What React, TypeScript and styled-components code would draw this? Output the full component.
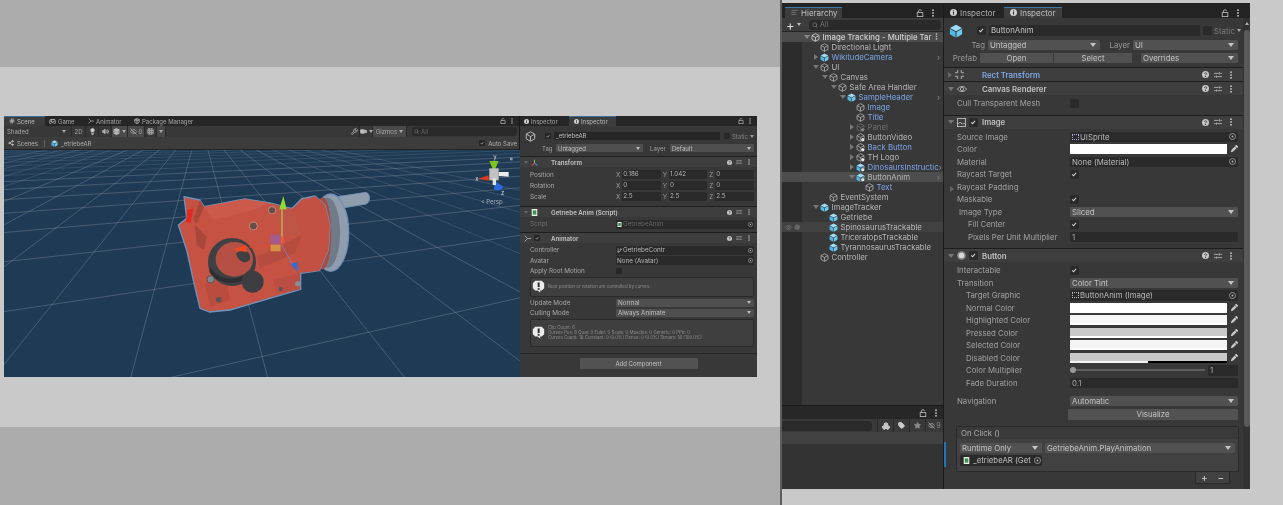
import React from 'react';
import styled, { createGlobalStyle } from 'styled-components';
import { Hash, Gamepad2, Package, Lightbulb, Volume2, Layers, EyeOff, Grid3x3, Wrench, Video, Tag, Star, Eye, Hand, AlignLeft, Search, Share2, Boxes, GitBranch } from 'lucide-react';

const Global = createGlobalStyle`
  html, body { margin: 0; padding: 0; background: #c9c9c9; overflow: hidden; }
  * { box-sizing: border-box; }
  body { font-family: Inter, "Liberation Sans", sans-serif; }
`;

const Page = styled.div`display:flex;width:1283px;height:505px;`;
const LeftArea = styled.div`width:780px;display:flex;flex-direction:column;`;
const GreyBand = styled.div<{ $h?: number }>`background:#acacac;height:${p => (p.$h ? `${p.$h}px` : 'auto')};flex:${p => (p.$h ? 'none' : '1')};`;
const LightBand = styled.div`background:#c9c9c9;height:360px;padding:49px 0 0 4px;`;
const Divider = styled.div`width:2px;background:#5e5e5e;`;
const RightArea = styled.div`flex:1;display:flex;flex-direction:column;padding-top:3px;background:#c9c9c9;`;

/* ---------- small drawings ---------- */
const Tri = styled.span<{ $open?: boolean; $c?: string; $s?: number }>`
  display:inline-block;width:0;height:0;flex:none;
  ${p => {
    const s = p.$s ?? 3;
    const c = p.$c ?? '#777';
    return p.$open
      ? `border-left:${s}px solid transparent;border-right:${s}px solid transparent;border-top:${s + 1}px solid ${c};`
      : `border-top:${s}px solid transparent;border-bottom:${s}px solid transparent;border-left:${s + 1}px solid ${c};`;
  }}
`;
const Cube = ({ s = 9, c = '#b4b4b4' }: { s?: number; c?: string }) => (
  <svg width={s} height={s} viewBox="0 0 16 16" fill="none" stroke={c} strokeWidth="1.4" style={{ flex: 'none' }}>
    <path d="M8 1.2 14.2 4.6V11.4L8 14.8 1.8 11.4V4.6Z" />
    <path d="M1.8 4.6 8 8 14.2 4.6M8 8V14.8" />
  </svg>
);
const Prefab = ({ s = 9, badge = false }: { s?: number; badge?: boolean }) => (
  <svg width={s} height={s} viewBox="0 0 16 16" style={{ flex: 'none' }}>
    <path d="M8 .8 14.8 4.5 8 8.2 1.2 4.5Z" fill="#9fdcf5" />
    <path d="M1 5.4 7.4 9V15.4L1 11.8Z" fill="#4fb8e6" />
    <path d="M15 5.4 8.6 9V15.4L15 11.8Z" fill="#6ec9ee" />
    {badge && <circle cx="12" cy="12" r="3.6" fill="#e8e8e8" stroke="#222" strokeWidth="1" />}
  </svg>
);
const BadgeCube = ({ s = 9, dim }: { s?: number; dim?: boolean }) => (
  <svg width={s} height={s} viewBox="0 0 16 16" fill="none" style={{ flex: 'none', opacity: dim ? 0.45 : 1 }}>
    <path d="M8 1.2 14.2 4.6V11.4L8 14.8 1.8 11.4V4.6Z M1.8 4.6 8 8 14.2 4.6M8 8V14.8" stroke="#b4b4b4" strokeWidth="1.4" />
    <circle cx="12" cy="12" r="3.6" fill="#e8e8e8" stroke="#222" strokeWidth="1" />
  </svg>
);
const Lock = ({ s = 8, c = '#c4c4c4' }: { s?: number; c?: string }) => (
  <svg width={s} height={s} viewBox="0 0 10 10" fill="none" stroke={c} strokeWidth="1" style={{ flex: 'none' }}>
    <rect x="1.5" y="4.5" width="7" height="5" />
    <path d="M3 4.5V2.2C3 .6 7 .6 7 2.2" />
  </svg>
);
const Kebab = ({ s = 8, c = '#c4c4c4' }: { s?: number; c?: string }) => (
  <svg width={s} height={s} viewBox="0 0 10 10" fill={c} style={{ flex: 'none' }}>
    <rect x="4" y=".5" width="2" height="2" /><rect x="4" y="4" width="2" height="2" /><rect x="4" y="7.5" width="2" height="2" />
  </svg>
);
const Info = ({ s = 7 }: { s?: number }) => (
  <svg width={s} height={s} viewBox="0 0 10 10" style={{ flex: 'none' }}>
    <circle cx="5" cy="5" r="5" fill="#cfcfcf" /><rect x="4.2" y="2" width="1.6" height="1.6" fill="#333" /><rect x="4.2" y="4.4" width="1.6" height="3.6" fill="#333" />
  </svg>
);
const Help = ({ s = 7 }: { s?: number }) => (
  <svg width={s} height={s} viewBox="0 0 10 10" style={{ flex: 'none' }}>
    <circle cx="5" cy="5" r="5" fill="#c8c8c8" /><path d="M3.4 4C3.4 2.2 6.8 2.2 6.8 4 6.8 5.2 5 5 5 6.4" stroke="#333" strokeWidth="1.2" fill="none" /><rect x="4.3" y="7.2" width="1.4" height="1.4" fill="#333" />
  </svg>
);
const Sliders = ({ s = 8 }: { s?: number }) => (
  <svg width={s} height={s} viewBox="0 0 10 10" stroke="#c0c0c0" strokeWidth="1" fill="none" style={{ flex: 'none' }}>
    <path d="M0 3H6M8 3H10M7 1.5V4.5M0 7H2M4 7H10M3 5.5V8.5" />
  </svg>
);
const Check = ({ c = '#d8d8d8' }: { c?: string }) => (
  <svg width="70%" height="70%" viewBox="0 0 10 10" fill="none" stroke={c} strokeWidth="1.6"><path d="M2 5.5 4 7.5 8 3" /></svg>
);
const Picker = () => (
  <svg width="8" height="8" viewBox="0 0 10 10" style={{ flex: 'none' }}>
    <path d="M1 9 2 6 6 2 8 4 4 8Z" fill="#ccc" /><path d="M6 1 9 4 10 2 8 0Z" fill="#ddd" />
  </svg>
);
const Target = ({ s = 7 }: { s?: number }) => (
  <svg width={s} height={s} viewBox="0 0 10 10" fill="none" stroke="#b8b8b8" style={{ flex: 'none' }}>
    <circle cx="5" cy="5" r="4.3" /><circle cx="5" cy="5" r="1.3" fill="#b8b8b8" stroke="none" />
  </svg>
);
const Warn = ({ s = 14 }: { s?: number }) => (
  <svg width={s} height={s} viewBox="0 0 16 16" style={{ flex: 'none' }}>
    <path d="M4 1H12L15 4V10L12 13H10V15.5L7 13H4L1 10V4Z" fill="#ececec" /><rect x="7" y="3" width="2.4" height="5.8" fill="#2e2e2e" /><rect x="7" y="10" width="2.4" height="2" fill="#2e2e2e" />
  </svg>
);
const ScriptIcon = ({ s = 8 }: { s?: number }) => (
  <svg width={s} height={s} viewBox="0 0 10 10" style={{ flex: 'none' }}>
    <rect x="1" y="0" width="8" height="10" fill="#e6efe6" /><rect x="2.5" y="2" width="5" height="6" fill="#3f8f5a" />
  </svg>
);
const Axes = ({ s = 8 }: { s?: number }) => (
  <svg width={s} height={s} viewBox="0 0 10 10" fill="none" strokeWidth="1.5" style={{ flex: 'none' }}>
    <path d="M5 6V1" stroke="#7fc43a" /><path d="M5 6 1 9" stroke="#e0503c" /><path d="M5 6 9 9" stroke="#4f8fe0" />
  </svg>
);
const RectIcon = ({ s = 9 }: { s?: number }) => (
  <svg width={s} height={s} viewBox="0 0 10 10" fill="none" stroke="#b0b0b0" strokeWidth="1.1" style={{ flex: 'none' }}>
    <path d="M0 3H3V0M7 0V3H10M10 7H7V10M3 10V7H0" />
  </svg>
);
const EyeRing = ({ s = 10 }: { s?: number }) => (
  <svg width={s} height={s} viewBox="0 0 12 12" fill="none" stroke="#c0c0c0" strokeWidth="1" style={{ flex: 'none' }}>
    <path d="M.5 6C3 2 9 2 11.5 6 9 10 3 10 .5 6Z" /><circle cx="6" cy="6" r="2" />
  </svg>
);
const FrameIcon = ({ s = 9 }: { s?: number }) => (
  <svg width={s} height={s} viewBox="0 0 10 10" fill="none" stroke="#c0c0c0" style={{ flex: 'none' }}>
    <rect x=".5" y=".5" width="9" height="9" /><path d="M.5 7.5 3.5 4.5 6 7 7.5 5.5 9.5 7.5" />
  </svg>
);
const ButtonIcon = ({ s = 9 }: { s?: number }) => (
  <svg width={s} height={s} viewBox="0 0 10 10" style={{ flex: 'none' }}>
    <circle cx="5" cy="5" r="4.8" fill="#8c8c8c" /><circle cx="5" cy="5" r="3" fill="#d8d8d8" />
  </svg>
);
const AnimatorIcon = ({ s = 8 }: { s?: number }) => (
  <svg width={s} height={s} viewBox="0 0 10 10" fill="none" stroke="#c8c8c8" strokeWidth="1" style={{ flex: 'none' }}>
    <path d="M1 1 5 5 1 9M5 5H10" />
  </svg>
);
const tiny = { strokeWidth: 3, style: { flex: 'none' as const } };

/* ---------- Unity window (small, left) ---------- */
const MiniWindow = styled.div`
  width:753px;height:261px;display:flex;background:#383838;color:#b4b4b4;font-size:6px;filter:blur(.3px);
`;
const ScenePanel = styled.div`width:516px;display:flex;flex-direction:column;border-right:1px solid #181818;`;
const MiniTabs = styled.div`height:10px;background:#262626;display:flex;align-items:stretch;padding-right:4px;flex:none;`;
const MiniTab = styled.div<{ $active?: boolean; $w: number; $pl?: number }>`
  width:${p => p.$w}px;padding-left:${p => p.$pl ?? 3}px;display:flex;align-items:center;gap:2px;white-space:nowrap;font-size:6px;
  ${p => p.$active ? 'background:#3c3c3c;box-shadow:inset 0 1px 0 #3a6e9c;color:#bbb;' : 'color:#a8a8a8;'}
`;
const TabIcons = styled.div`margin-left:auto;display:flex;align-items:center;gap:3px;`;
const SceneToolbar = styled.div`height:11px;background:#383838;display:flex;align-items:center;flex:none;padding-left:3px;`;
const ToolCell = styled.div<{ $w: number; $active?: boolean }>`
  width:${p => p.$w}px;height:100%;display:flex;align-items:center;justify-content:center;gap:2px;flex:none;color:#a8a8a8;
  border-right:1px solid #2a2a2a;background:${p => (p.$active ? '#4a4a4a' : 'transparent')};
`;
const ShadedCell = styled(ToolCell)`justify-content:space-between;padding-right:5px;border-right:1px solid #2a2a2a;`;
const ToolSpacer = styled.div`flex:1;`;
const MiniSearch = styled.div`width:105px;height:9px;margin:0 2px 0 5px;border-radius:3px;background:#2a2a2a;color:#666;display:flex;align-items:center;gap:2px;padding-left:2px;flex:none;`;
const Breadcrumb = styled.div`height:13px;background:#3c3c3c;border-bottom:1px solid #232323;display:flex;align-items:center;padding:0 2px 0 4px;gap:3px;flex:none;`;
const Crumb = styled.span`color:#b0b0b0;font-size:6px;`;
const CrumbSep = styled.span`width:1px;height:7px;background:#666;margin:0 3px;`;
const AutoSave = styled.div`margin-left:auto;display:flex;align-items:center;gap:3px;`;
const MiniBox = styled.span`width:6px;height:6px;background:#262626;border-radius:1px;display:flex;align-items:center;justify-content:center;flex:none;`;
const Viewport = styled.svg`display:block;width:516px;height:227px;flex:none;background:#1f3a55;`;

const gridLines = () => {
  const out: React.ReactNode[] = [];
  const hy = 30;
  for (let k = -9; k < 10; k++) {
    const bx = 390 + 415 * k;
    const vx = 600;
    const yTop = 118;
    const xt = vx + (bx - vx) * ((yTop - hy) / (800 - hy));
    out.push(<line key={`a${k}`} x1={xt} y1={yTop} x2={bx} y2={810} opacity={Math.abs(k) > 4 ? 0.5 : 0.75} />);
  }
  for (let k = -2; k < 15; k++) {
    const inv = 0.00277 + 0.00072 * k;
    const y600 = hy + 1 / inv;
    const f = (x: number) => hy + (y600 - hy) * ((3900 - x) / 3300);
    out.push(<line key={`b${k}`} x1={0} y1={f(0)} x2={1570} y2={f(1570)} opacity={k > 5 ? 0.4 : 0.72} />);
  }
  return out;
};

const SceneArt = () => (
  <Viewport viewBox="0 0 516 227">
    <g transform="translate(-4,-40) scale(.33333)">
      <g stroke="#7f8e9c" strokeWidth="1.7" fill="none">{gridLines()}</g>
      {/* shaft and flange */}
      <path d="M1000 262 1098 247C1112 250 1112 278 1098 282L1040 292 1010 296Z" fill="#8f9dac" stroke="#6f90b5" strokeWidth="3" />
      <ellipse cx="992" cy="368" rx="54" ry="116" fill="#8f9dae" stroke="#6f90b5" strokeWidth="4" />
      <ellipse cx="982" cy="368" rx="38" ry="106" fill="#6f7b88" />
      <ellipse cx="968" cy="370" rx="26" ry="108" fill="#a54c43" />
      {/* housing */}
      <path d="M552 260 600 270 612 290 735 267 810 279 875 296 905 266 945 258 975 285 990 345 985 420 958 482 902 490 902 538 840 556 690 600 628 606 600 595 582 520 560 420 535 345 560 325Z" fill="#c55243" stroke="#6d94bd" strokeWidth="4" strokeLinejoin="round" />
      <path d="M875 296 945 258 975 285 990 345 985 420 958 482 905 488 880 430 905 370Z" fill="#c25144" />
      <path d="M612 290 735 267 810 279 760 300 640 330Z" fill="#cb5a4b" />
      <path d="M810 279 875 296 905 375 850 372Z" fill="#bd5549" />
      <path d="M770 440 905 375 885 430 780 475Z" fill="#b64c40" />
      <path d="M600 270 612 290 590 340 580 330Z M585 345 620 380 612 420 590 405Z" fill="#a8463a" />
      <path d="M562 300 580 295 572 340 558 335Z" fill="#e32a22" />
      <path d="M615 520 680 505 690 570 630 590Z" fill="#b94c3f" />
      <path d="M820 510 900 490 900 538 830 550Z" fill="#bb4e42" />
      {/* bore */}
      <ellipse cx="696" cy="456" rx="72" ry="72" fill="#3f4044" />
      <ellipse cx="703" cy="448" rx="56" ry="52" fill="#b65045" />
      <path d="M708 430C725 415 755 422 750 448 740 465 715 458 708 430Z" fill="#3f4044" />
      <path d="M630 470C650 505 700 520 745 490L755 495C720 530 650 525 628 485Z" fill="#2d2e31" />
      <circle cx="758" cy="515" r="33" fill="#3d3e42" />
      <circle cx="760" cy="348" r="12" fill="#6a4a46" stroke="#e0a79d" strokeWidth="2" />
      <circle cx="816" cy="301" r="11" fill="#6a4a46" stroke="#e0a79d" strokeWidth="2" />
      <circle cx="632" cy="508" r="11" fill="#7d8790" stroke="#5b3a36" strokeWidth="2" />
      <circle cx="656" cy="569" r="8" fill="#555" />
      <circle cx="893" cy="521" r="8" fill="#8c8c8c" />
      <circle cx="842" cy="537" r="6" fill="#555" />
      {/* move gizmo */}
      <line x1="846" y1="400" x2="846" y2="295" stroke="#c6d848" strokeWidth="3" />
      <path d="M850 258 838 298H860Z" fill="#8fdb35" />
      <line x1="842" y1="405" x2="735" y2="412" stroke="#ea4a2a" strokeWidth="3" strokeDasharray="10 4" />
      <path d="M698 420 738 404V426Z" fill="#ef4a1f" />
      <line x1="845" y1="405" x2="880" y2="468" stroke="#6f8fe8" strokeWidth="2" />
      <path d="M872 462 892 456 893 486Z" fill="#2f6fe0" />
      <rect x="812" y="374" width="30" height="30" fill="#9a5fa5" opacity=".75" />
      <rect x="812" y="404" width="30" height="20" fill="#d89a45" opacity=".9" />
      <rect x="842" y="380" width="12" height="24" fill="#e8503a" opacity=".75" />
      {/* view gizmo */}
      <path d="M1468 153H1496L1482 186Z" fill="#7cc41e" />
      <path d="M1434 206 1466 196V212Z" fill="#e0381f" />
      <path d="M1484 212 1510 230C1508 240 1488 246 1482 236Z" fill="#2a6be0" />
      <path d="M1496 186 1526 186V200L1496 198Z" fill="#eaeaea" />
      <rect x="1468" y="175" width="28" height="36" fill="#c2c2c2" />
      <rect x="1478" y="205" width="10" height="20" fill="#e4e4e4" />
      <text x="1480" y="146" fontSize="18" fill="#dcdcdc" fontFamily="Inter">y</text>
      <text x="1426" y="212" fontSize="18" fill="#dcdcdc" fontFamily="Inter">x</text>
      <text x="1503" y="256" fontSize="18" fill="#dcdcdc" fontFamily="Inter">z</text>
      <text x="1442" y="282" fontSize="18" fill="#a6b2be" fontFamily="Inter">&lt; Persp</text>
      <rect x="1530" y="143" width="8" height="8" fill="#8d99a5" />
    </g>
  </Viewport>
);

const MiniInspector = styled.div`flex:1;display:flex;flex-direction:column;background:#383838;`;
const MiniHead = styled.div`height:30px;display:flex;flex-direction:column;padding:6px 3px 0 5px;flex:none;`;
const MiniHeadRow = styled.div`display:flex;align-items:center;height:8px;`;
const MiniHeadGap = styled.span`width:9px;flex:none;`;
const MiniTagRow = styled(MiniHeadRow)`margin-top:4px;padding-left:17px;`;
const MiniName = styled.div`width:166px;height:8px;margin-left:3px;background:#262626;border-radius:1px;padding-left:2px;line-height:8px;color:#c0c0c0;flex:none;`;
const MiniStatic = styled.span`margin-left:auto;display:flex;align-items:center;gap:2px;color:#808080;`;
const MiniLabelText = styled.span<{ $w?: number; $pl?: number }>`width:${p => (p.$w ? `${p.$w}px` : 'auto')};padding-left:${p => p.$pl ?? 0}px;flex:none;color:#a0a0a0;`;
const MiniDrop = styled.div<{ $w?: number }>`
  ${p => (p.$w ? `width:${p.$w}px;flex:none;` : 'flex:1;')}
  height:8px;background:#4f4f4f;border-radius:1px;padding:0 3px 0 2px;display:flex;justify-content:space-between;align-items:center;color:#c0c0c0;
`;
const MiniHeader = styled.div<{ $h?: number }>`
  height:${p => p.$h ?? 11}px;background:#3e3e3e;border-top:1px solid #1f1f1f;display:flex;align-items:center;padding:0 5px 0 0;flex:none;
`;
const MiniHeaderLead = styled.div`width:31px;padding-left:4px;display:flex;align-items:center;justify-content:flex-start;gap:3px;flex:none;`;
const MiniTitle = styled.span`font-weight:600;color:#c2c2c2;font-size:6.2px;`;
const MiniActions = styled.div`margin-left:auto;display:flex;align-items:center;gap:4px;`;
const MiniGap = styled.div<{ $h: number }>`height:${p => p.$h}px;flex:none;`;
const MiniRow = styled.div<{ $h?: number; $dim?: boolean; $mt?: number }>`
  height:${p => p.$h ?? 10.5}px;margin-top:${p => p.$mt ?? 0}px;display:flex;align-items:center;padding:0 3px 0 10px;flex:none;font-size:6.3px;color:${p => (p.$dim ? '#6f6f6f' : '#aaa')};
`;
const MiniKey = styled.span`width:86px;flex:none;`;
const MiniVector = styled.div`flex:1;display:grid;grid-template-columns:repeat(3,1fr);gap:2px;`;
const MiniAxis = styled.div`display:flex;align-items:center;gap:2px;color:#9a9a9a;`;
const MiniNum = styled.div`flex:1;height:8.5px;background:#2a2a2a;line-height:8.5px;padding-left:1px;color:#b4b4b4;border-radius:1px;`;
const MiniObject = styled.div<{ $dim?: boolean }>`
  flex:1;height:9px;background:#2a2a2a;border-radius:1px;display:flex;align-items:center;justify-content:space-between;padding:0 1px;
  color:${p => (p.$dim ? '#666' : '#b8b8b8')};white-space:nowrap;
`;
const MiniObjectName = styled.span`display:flex;align-items:center;gap:1px;`;
const MiniHelp = styled.div<{ $h: number; $mt?: number }>`
  height:${p => p.$h}px;margin:${p => p.$mt ?? 0}px 3px 1px 10px;background:#3f3f3f;border:1px solid #2a2a2a;border-radius:2px;display:flex;align-items:center;gap:3px;padding-left:1px;flex:none;
  color:#8e8e8e;font-size:4.4px;line-height:5px;white-space:nowrap;
`;
const MiniFoot = styled.div`margin-top:5px;border-top:1px solid #262626;padding-top:4px;display:flex;justify-content:center;flex:none;`;
const MiniAdd = styled.div`width:118px;height:11px;background:#525252;border-radius:1px;text-align:center;line-height:11px;color:#c0c0c0;`;

/* ---------- Editor (right) ---------- */
const Editor = styled.div`height:486px;width:468px;display:flex;background:#383838;color:#b6b6b6;font-size:7.8px;filter:blur(.25px);flex:none;`;
const HierarchyPanel = styled.div`width:162px;display:flex;flex-direction:column;border-right:1px solid #1c1c1c;`;
const TabBar = styled.div<{ $pl?: number }>`height:15px;padding:4px 3px 0 ${p => p.$pl ?? 3}px;background:#232323;display:flex;align-items:stretch;flex:none;`;
const Tab = styled.div<{ $active?: boolean; $w: number }>`
  width:${p => p.$w}px;display:flex;align-items:center;gap:3px;padding-left:6px;font-size:8px;white-space:nowrap;
  color:${p => (p.$active ? '#c0c0c0' : '#b0b0b0')};
  ${p => p.$active ? 'background:#3c3c3c;box-shadow:inset 0 1px 0 #3a79ad;' : ''}
`;
const PanelIcons = styled.div<{ $pr?: number }>`margin-left:auto;display:flex;align-items:center;gap:5px;padding-right:${p => p.$pr ?? 3}px;`;
const HierBar = styled.div`height:14px;background:#3c3c3c;border-bottom:1px solid #252525;display:flex;align-items:center;padding:0 2px 0 4px;flex:none;`;
const PlusBtn = styled.div`width:23px;display:flex;align-items:center;gap:2px;flex:none;`;
const PlusGlyph = styled.span`font-size:13px;line-height:10px;color:#ddd;`;
const SearchBox = styled.div`flex:1;height:10px;background:#2a2a2a;border-radius:3px;color:#777;display:flex;align-items:center;gap:2px;padding-left:3px;font-size:7px;`;
const Tree = styled.div`height:373px;background:linear-gradient(to right,#2c2c2c 20px,#383838 20px);flex:none;`;
const TreeRow = styled.div<{ $lvl: number; $bg?: string; $tone?: string }>`
  height:10px;display:flex;align-items:center;padding-left:${p => 20 + p.$lvl * 9}px;padding-right:3px;position:relative;white-space:nowrap;
  background:${p => p.$bg ?? 'transparent'};color:${p => p.$tone ?? '#b6b6b6'};
`;
const ArrowSlot = styled.span`width:9px;display:flex;justify-content:center;flex:none;`;
const RowText = styled.span<{ $bold?: boolean }>`margin-left:2.5px;font-weight:${p => (p.$bold ? 500 : 400)};`;
const Chevron = styled.span`margin-left:auto;color:#8a8a8a;font-size:8px;line-height:8px;`;
const GutterIcons = styled.span`position:absolute;left:3px;top:2px;display:flex;gap:2px;color:#6a6a6a;`;
const BottomBar = styled.div`height:14px;background:#272727;border-top:1px solid #1a1a1a;display:flex;justify-content:flex-end;align-items:center;gap:5px;padding-right:3px;flex:none;`;
const BottomSearch = styled.div`height:13px;background:#3a3a3a;display:flex;align-items:center;flex:none;`;
const BottomField = styled.div`width:90px;height:10px;background:#2a2a2a;border-radius:0 3px 3px 0;flex:none;margin-right:5px;`;
const BottomIcon = styled.div<{ $w: number }>`width:${p => p.$w}px;height:100%;display:flex;align-items:center;justify-content:center;border-left:1px solid #2a2a2a;color:#888;font-size:7px;gap:1px;flex:none;`;
const BottomBand = styled.div`height:12px;background:#414141;flex:none;`;
const BottomRest = styled.div`flex:1;background:#333;`;

const InspectorPanel = styled.div`flex:1;display:flex;flex-direction:column;position:relative;min-width:0;`;
const InspectorBody = styled.div`flex:1;display:flex;min-height:0;`;
const Content = styled.div`flex:1;min-width:0;display:flex;flex-direction:column;`;
const Scrollbar = styled.div`width:7px;background:#323232;display:flex;flex-direction:column;align-items:center;padding-top:4px;flex:none;`;
const UpArrow = styled(Tri)`transform:rotate(180deg);`;
const Thumb = styled.div`width:6px;height:397px;margin-top:5px;background:#5a5a5a;border-radius:3px;`;
const HeadBlock = styled.div`height:49px;padding-top:7px;display:flex;flex-direction:column;flex:none;`;
const NameRow = styled.div`height:11px;display:flex;align-items:center;padding-left:5px;`;
const NameField = styled.div`width:211px;height:11px;margin-left:3px;background:#2a2a2a;border-radius:2px;padding-left:2px;line-height:11px;color:#c6c6c6;flex:none;`;
const CheckBox = styled.span<{ $s?: number }>`width:${p => p.$s ?? 9}px;height:${p => p.$s ?? 9}px;background:#2a2a2a;border-radius:1.5px;display:flex;align-items:center;justify-content:center;flex:none;`;
const StaticWrap = styled.div`display:flex;align-items:center;margin-left:3px;gap:2px;color:#7c7c7c;`;
const IconWrap = styled.div`position:relative;width:28px;display:flex;flex:none;`;
const TagRow = styled.div`height:10px;margin-top:4px;display:flex;align-items:center;padding-right:5px;`;
const TagLabel = styled.span<{ $w: number; $right?: boolean }>`width:${p => p.$w}px;flex:none;color:#9a9a9a;${p => (p.$right ? 'text-align:right;padding-right:3px;' : '')}`;
const Drop = styled.div<{ $w?: number; $h?: number; $light?: boolean }>`
  ${p => (p.$w ? `width:${p.$w}px;flex:none;` : 'flex:1;')}
  height:${p => p.$h ?? 10}px;background:${p => (p.$light ? '#565656' : '#515151')};border-radius:1.5px;padding:0 4px 0 2px;display:flex;align-items:center;justify-content:space-between;color:#c4c4c4;white-space:nowrap;
`;
const PrefabRow = styled(TagRow)`margin-top:3px;`;
const PrefabBtn = styled.div<{ $w: number; $mr?: number }>`
  width:${p => p.$w}px;margin-right:${p => p.$mr ?? 1}px;height:10px;background:#515151;text-align:center;line-height:10px;color:#c4c4c4;flex:none;
`;
const SecHeader = styled.div`height:14px;background:#3e3e3e;border-top:1px solid #1e1e1e;display:flex;align-items:center;flex:none;padding-right:8px;`;
const SecLead = styled.div`width:38px;padding-left:4px;display:flex;align-items:center;gap:3px;flex:none;`;
const SecTitle = styled.span<{ $blue?: boolean }>`font-weight:600;color:${p => (p.$blue ? '#7ea8e6' : '#c0c0c0')};`;
const SecActions = styled.div`margin-left:auto;display:flex;align-items:center;gap:5px;`;
const SecBody = styled.div<{ $pb?: number }>`padding:2px 0 ${p => p.$pb ?? 5}px;flex:none;`;
const Row = styled.div<{ $mt?: number; $h?: number }>`
  height:${p => p.$h ?? 12.5}px;display:flex;align-items:center;padding-right:5px;flex:none;
  margin-top:${p => p.$mt ?? 0}px;color:#a0a0a0;
`;
const Label = styled.span<{ $indent?: number }>`
  width:126px;flex:none;padding-left:${p => 13 + (p.$indent ?? 0)}px;white-space:nowrap;position:relative;
`;
const LabelArrow = styled.span`position:absolute;left:6px;top:2px;`;
const ObjField = styled.div`flex:1;height:10.5px;background:#2a2a2a;border-radius:1.5px;display:flex;align-items:center;justify-content:space-between;padding:0 2px 0 2px;color:#b8b8b8;white-space:nowrap;`;
const ObjName = styled.span`display:flex;align-items:center;gap:1px;`;
const Sprite = styled.span<{ $c?: string }>`width:7px;height:6px;border:1px dotted ${p => p.$c ?? '#b9a4e6'};display:inline-block;flex:none;`;
const NumField = styled.div<{ $w?: number }>`${p => (p.$w ? `width:${p.$w}px;flex:none;` : 'flex:1;')}height:10.5px;background:#2a2a2a;border-radius:1.5px;line-height:10.5px;padding-left:2px;color:#aaa;`;
const SwatchWrap = styled.div`flex:1;display:flex;align-items:center;gap:3px;`;
const Swatch = styled.div<{ $c: string; $under?: string }>`
  width:157px;height:10px;flex:none;background:${p => p.$c};border-bottom:2px solid ${p => p.$under ?? p.$c};position:relative;
`;
const SwatchBar = styled.div`position:absolute;left:0;right:0;bottom:-2px;height:2px;background:linear-gradient(to right,#f2f2f2 50%,#000 50%);`;
const SliderTrack = styled.div`flex:1;height:2px;background:#5c5c5c;margin:0 3px;position:relative;`;
const SliderThumb = styled.span`position:absolute;left:-3px;top:-2px;width:6px;height:6px;border-radius:50%;background:#9a9a9a;`;
const Visualize = styled.div`width:170px;height:10.5px;background:#525252;text-align:center;line-height:10.5px;color:#c4c4c4;border-radius:1px;`;
const RightValue = styled.div`margin-left:auto;display:flex;`;
const OnClick = styled.div`margin:5px 4px 0 12px;border:1px solid #2a2a2a;background:#414141;border-radius:2px;height:46px;display:flex;flex-direction:column;flex:none;`;
const OnClickHead = styled.div`height:12px;background:#3a3a3a;padding-left:4px;line-height:12px;color:#aaa;flex:none;`;
const OnClickRow = styled.div`display:flex;gap:3px;padding:4px 3px 0 3px;`;
const OnClickRow2 = styled.div`padding:2px 3px 0 3px;`;
const TargetObj = styled.div`width:82px;height:11px;background:#2a2a2a;border-radius:1.5px;display:flex;align-items:center;justify-content:space-between;padding:0 1px 0 3px;color:#c0c0c0;white-space:nowrap;overflow:hidden;gap:2px;`;
const PlusMinus = styled.div`width:35px;height:12px;margin-left:251px;background:#414141;border:1px solid #2a2a2a;border-top:none;border-radius:0 0 2px 2px;display:flex;justify-content:space-around;align-items:center;color:#ddd;font-size:10px;flex:none;`;
const BlueBar = styled.span`position:absolute;left:0;top:439px;width:2px;height:25px;background:#1f78b4;`;

type Node = { t: string; l: number; arrow?: 'o' | 'c'; icon?: 'cube' | 'prefab' | 'badge' | 'dimbadge' | 'pbadge'; tone?: string; bg?: string; chev?: boolean; gutter?: boolean };
const BLUE = '#7ba4e4';
const nodes: Node[] = [
  { t: 'Directional Light', l: 1, icon: 'cube' },
  { t: 'WikitudeCamera', l: 1, arrow: 'c', icon: 'prefab', tone: BLUE, chev: true },
  { t: 'UI', l: 1, arrow: 'o', icon: 'cube' },
  { t: 'Canvas', l: 2, arrow: 'o', icon: 'cube' },
  { t: 'Safe Area Handler', l: 3, arrow: 'o', icon: 'cube' },
  { t: 'SampleHeader', l: 4, arrow: 'o', icon: 'prefab', tone: BLUE, chev: true },
  { t: 'Image', l: 5, icon: 'cube', tone: BLUE },
  { t: 'Title', l: 5, icon: 'cube', tone: BLUE },
  { t: 'Panel', l: 5, arrow: 'c', icon: 'dimbadge', tone: '#6f6f6f' },
  { t: 'ButtonVideo', l: 5, arrow: 'c', icon: 'badge' },
  { t: 'Back Button', l: 5, arrow: 'c', icon: 'badge', tone: BLUE },
  { t: 'TH Logo', l: 5, arrow: 'c', icon: 'badge' },
  { t: 'DinosaursInstructic', l: 5, arrow: 'c', icon: 'pbadge', tone: BLUE, chev: true },
  { t: 'ButtonAnim', l: 5, arrow: 'o', icon: 'pbadge', bg: '#4d4d4d', chev: true },
  { t: 'Text', l: 6, icon: 'cube', tone: BLUE },
  { t: 'EventSystem', l: 2, icon: 'cube' },
  { t: 'ImageTracker', l: 1, arrow: 'o', icon: 'prefab' },
  { t: 'Getriebe', l: 2, icon: 'prefab' },
  { t: 'SpinosaurusTrackable', l: 2, icon: 'prefab', bg: '#414141', gutter: true },
  { t: 'TriceratopsTrackable', l: 2, icon: 'prefab' },
  { t: 'TyrannosaurusTrackable', l: 2, icon: 'prefab' },
  { t: 'Controller', l: 1, icon: 'cube' },
];

const NodeIcon = ({ k }: { k?: Node['icon'] }) =>
  k === 'prefab' ? <Prefab /> : k === 'pbadge' ? <Prefab badge /> : k === 'badge' ? <BadgeCube /> : k === 'dimbadge' ? <BadgeCube dim /> : <Cube />;

const ComponentActions = ({ small }: { small?: boolean }) =>
  small ? (
    <MiniActions><Help s={5} /><Sliders s={6} /><Kebab s={6} /></MiniActions>
  ) : (
    <SecActions><Help /><Sliders /><Kebab /></SecActions>
  );

const ColorRow = ({ name, c, under, bar, indent = 9 }: { name: string; c: string; under?: string; bar?: boolean; indent?: number }) => (
  <Row>
    <Label $indent={indent}>{name}</Label>
    <SwatchWrap>
      <Swatch $c={c} $under={under}>{bar && <SwatchBar />}</Swatch>
      <Picker />
    </SwatchWrap>
  </Row>
);

const DropDown = ({ text, w, h }: { text: string; w?: number; h?: number }) => (
  <Drop $w={w} $h={h}>{text}<Tri $open $c="#c4c4c4" $s={3} /></Drop>
);

const App = () => (
  <Page>
    <Global />
    <LeftArea>
      <GreyBand $h={67} />
      <LightBand>
        <MiniWindow>
          <ScenePanel>
            <MiniTabs>
              <MiniTab $active $w={41} $pl={5}><Hash size={6} color="#bbb" {...tiny} />Scene</MiniTab>
              <MiniTab $w={40} $pl={4}><Gamepad2 size={7} color="#bbb" {...tiny} />Game</MiniTab>
              <MiniTab $w={46} $pl={3}><AnimatorIcon s={6} />Animator</MiniTab>
              <MiniTab $w={90}><Package size={6} color="#bbb" {...tiny} />Package Manager</MiniTab>
              <TabIcons><Lock s={6} /><Kebab s={6} /></TabIcons>
            </MiniTabs>
            <SceneToolbar>
              <ShadedCell $w={65}>Shaded<Tri $open $c="#aaa" $s={2} /></ShadedCell>
              <ToolCell $w={14}>2D</ToolCell>
              <ToolCell $w={13}><Lightbulb size={7} color="#ccc" fill="#ccc" {...tiny} /></ToolCell>
              <ToolCell $w={13}><Volume2 size={7} color="#aaa" fill="#aaa" {...tiny} /></ToolCell>
              <ToolCell $w={16} $active><Layers size={7} color="#bbb" fill="#bbb" {...tiny} /><Tri $open $c="#aaa" $s={2} /></ToolCell>
              <ToolCell $w={17} $active><EyeOff size={7} color="#999" {...tiny} />0</ToolCell>
              <ToolCell $w={12}><Grid3x3 size={7} color="#aaa" {...tiny} /></ToolCell>
              <ToolCell $w={9} $active><Tri $open $c="#aaa" $s={2} /></ToolCell>
              <ToolSpacer />
              <ToolCell $w={11}><Wrench size={7} color="#aaa" {...tiny} /></ToolCell>
              <ToolCell $w={13}><Video size={7} color="#bbb" fill="#bbb" {...tiny} /><Tri $open $c="#aaa" $s={2} /></ToolCell>
              <ToolCell $w={34} $active>Gizmos<Tri $open $c="#aaa" $s={2} /></ToolCell>
              <MiniSearch><Search size={5} color="#777" {...tiny} />All</MiniSearch>
            </SceneToolbar>
            <Breadcrumb>
              <Share2 size={6} color="#bbb" fill="#bbb" {...tiny} />
              <Crumb>Scenes</Crumb>
              <CrumbSep />
              <Prefab s={7} />
              <Crumb>_etriebeAR</Crumb>
              <AutoSave>
                <MiniBox><Check /></MiniBox>
                <Crumb>Auto Save</Crumb>
              </AutoSave>
            </Breadcrumb>
            <SceneArt />
          </ScenePanel>
          <MiniInspector>
            <MiniTabs>
              <MiniTab $w={49} $pl={4}><Info s={5} />Inspector</MiniTab>
              <MiniTab $active $w={47} $pl={5}><Info s={5} />Inspector</MiniTab>
              <TabIcons><Lock s={6} /><Kebab s={6} /></TabIcons>
            </MiniTabs>
            <MiniHead>
              <MiniHeadRow>
                <Cube s={11} c="#bcbcbc" />
                <MiniHeadGap />
                <MiniBox><Check /></MiniBox>
                <MiniName>_etriebeAR</MiniName>
                <MiniStatic><MiniBox />Static<Tri $open $c="#999" $s={2} /></MiniStatic>
              </MiniHeadRow>
              <MiniTagRow>
                <MiniLabelText $w={14}>Tag</MiniLabelText>
                <MiniDrop $w={87}>Untagged<Tri $open $c="#bbb" $s={2} /></MiniDrop>
                <MiniLabelText $w={27} $pl={7}>Layer</MiniLabelText>
                <MiniDrop>Default<Tri $open $c="#bbb" $s={2} /></MiniDrop>
              </MiniTagRow>
            </MiniHead>
            <MiniHeader>
              <MiniHeaderLead><Tri $open $c="#666" $s={2} /><Axes s={7} /></MiniHeaderLead>
              <MiniTitle>Transform</MiniTitle>
              <ComponentActions small />
            </MiniHeader>
            <MiniGap $h={2} />
            {[['Position', '0.186', '1.042', '0'], ['Rotation', '0', '0', '0'], ['Scale', '2.5', '2.5', '2.5']].map(r => (
              <MiniRow key={r[0]} $h={11}>
                <MiniKey>{r[0]}</MiniKey>
                <MiniVector>
                  <MiniAxis>X<MiniNum>{r[1]}</MiniNum></MiniAxis>
                  <MiniAxis>Y<MiniNum>{r[2]}</MiniNum></MiniAxis>
                  <MiniAxis>Z<MiniNum>{r[3]}</MiniNum></MiniAxis>
                </MiniVector>
              </MiniRow>
            ))}
            <MiniGap $h={4} />
            <MiniHeader>
              <MiniHeaderLead><Tri $open $c="#666" $s={2} /><ScriptIcon s={7} /></MiniHeaderLead>
              <MiniTitle>Getriebe Anim (Script)</MiniTitle>
              <ComponentActions small />
            </MiniHeader>
            <MiniRow $dim $h={12} $mt={1}>
              <MiniKey>Script</MiniKey>
              <MiniObject $dim><MiniObjectName><ScriptIcon s={5} />GetriebeAnim</MiniObjectName><Target s={5} /></MiniObject>
            </MiniRow>
            <MiniGap $h={2} />
            <MiniHeader>
              <MiniHeaderLead><AnimatorIcon s={7} /><MiniBox><Check /></MiniBox></MiniHeaderLead>
              <MiniTitle>Animator</MiniTitle>
              <ComponentActions small />
            </MiniHeader>
            <MiniGap $h={2} />
            <MiniRow>
              <MiniKey>Controller</MiniKey>
              <MiniObject><MiniObjectName><GitBranch size={5} color="#aaa" {...tiny} />GetriebeContr</MiniObjectName><Target s={5} /></MiniObject>
            </MiniRow>
            <MiniRow>
              <MiniKey>Avatar</MiniKey>
              <MiniObject>None (Avatar)<Target s={5} /></MiniObject>
            </MiniRow>
            <MiniRow>
              <MiniKey>Apply Root Motion</MiniKey>
              <MiniBox />
            </MiniRow>
            <MiniHelp $h={20}><Warn s={13} />Root position or rotation are controlled by curves.</MiniHelp>
            <MiniRow $h={10}>
              <MiniKey>Update Mode</MiniKey>
              <MiniDrop>Normal<Tri $open $c="#bbb" $s={2} /></MiniDrop>
            </MiniRow>
            <MiniRow $h={10}>
              <MiniKey>Culling Mode</MiniKey>
              <MiniDrop>Always Animate<Tri $open $c="#bbb" $s={2} /></MiniDrop>
            </MiniRow>
            <MiniHelp $h={28} $mt={1}>
              <Warn s={13} />
              <div>Clip Count: 6<br />Curves Pos: 6 Quat: 0 Euler: 0 Scale: 0 Muscles: 0 Generic: 0 PPtr: 0<br />Curves Count: 18 Constant: 0 (0.0%) Dense: 0 (0.0%) Stream: 18 (100.0%)</div>
            </MiniHelp>
            <MiniFoot><MiniAdd>Add Component</MiniAdd></MiniFoot>
          </MiniInspector>
        </MiniWindow>
      </LightBand>
      <GreyBand />
    </LeftArea>
    <Divider />
    <RightArea>
      <Editor>
        <HierarchyPanel>
          <TabBar>
            <Tab $active $w={57}><AlignLeft size={7} color="#777" {...tiny} />Hierarchy</Tab>
            <PanelIcons><Lock /><Kebab /></PanelIcons>
          </TabBar>
          <HierBar>
            <PlusBtn><PlusGlyph>+</PlusGlyph><Tri $open $c="#bbb" $s={2} /></PlusBtn>
            <SearchBox><Search size={6} color="#777" {...tiny} />All</SearchBox>
          </HierBar>
          <Tree>
            <TreeRow $lvl={0} $bg="#4b4b4b" $tone="#d0d0d0">
              <ArrowSlot><Tri $open $c="#888" /></ArrowSlot>
              <Cube c="#d8d8d8" />
              <RowText $bold>Image Tracking - Multiple Tar</RowText>
              <Chevron><Kebab s={7} /></Chevron>
            </TreeRow>
            {nodes.map(n => (
              <TreeRow key={n.t} $lvl={n.l} $bg={n.bg} $tone={n.tone}>
                {n.gutter && <GutterIcons><Eye size={7} {...tiny} /><Hand size={6} fill="#6a6a6a" {...tiny} /></GutterIcons>}
                <ArrowSlot>{n.arrow && <Tri $open={n.arrow === 'o'} $c="#777" />}</ArrowSlot>
                <NodeIcon k={n.icon} />
                <RowText>{n.t}</RowText>
                {n.chev && <Chevron>›</Chevron>}
              </TreeRow>
            ))}
          </Tree>
          <BottomBar><Lock /><Kebab /></BottomBar>
          <BottomSearch>
            <BottomField />
            <BottomIcon $w={16}><Boxes size={8} color="#c8c8c8" fill="#c8c8c8" {...tiny} /></BottomIcon>
            <BottomIcon $w={16}><Tag size={7} color="#ccc" fill="#ccc" {...tiny} /></BottomIcon>
            <BottomIcon $w={16}><Star size={7} color="#888" fill="#888" {...tiny} /></BottomIcon>
            <BottomIcon $w={18}><EyeOff size={7} color="#999" {...tiny} />9</BottomIcon>
          </BottomSearch>
          <BottomBand />
          <BottomRest />
        </HierarchyPanel>
        <InspectorPanel>
          <BlueBar />
          <TabBar $pl={0}>
            <Tab $w={60}><Info />Inspector</Tab>
            <Tab $active $w={58}><Info />Inspector</Tab>
            <PanelIcons $pr={5}><Lock /><Kebab /></PanelIcons>
          </TabBar>
          <InspectorBody>
            <Content>
              <HeadBlock>
                <NameRow>
                  <IconWrap><Prefab s={14} /></IconWrap>
                  <CheckBox><Check /></CheckBox>
                  <NameField>ButtonAnim</NameField>
                  <StaticWrap><CheckBox />Static<Tri $open $c="#aaa" $s={2} /></StaticWrap>
                </NameRow>
                <TagRow>
                  <TagLabel $w={44} $right>Tag</TagLabel>
                  <DropDown text="Untagged" w={112} />
                  <TagLabel $w={33} $right>Layer</TagLabel>
                  <DropDown text="UI" />
                </TagRow>
                <PrefabRow>
                  <TagLabel $w={36} $right>Prefab</TagLabel>
                  <PrefabBtn $w={73}>Open</PrefabBtn>
                  <PrefabBtn $w={78} $mr={9}>Select</PrefabBtn>
                  <DropDown text="Overrides" />
                </PrefabRow>
              </HeadBlock>
              <SecHeader>
                <SecLead><Tri $c="#666" /><RectIcon /></SecLead>
                <SecTitle $blue>Rect Transform</SecTitle>
                <ComponentActions />
              </SecHeader>
              <SecHeader>
                <SecLead><Tri $open $c="#777" /><EyeRing /></SecLead>
                <SecTitle>Canvas Renderer</SecTitle>
                <ComponentActions />
              </SecHeader>
              <SecBody $pb={5}>
                <Row><Label>Cull Transparent Mesh</Label><CheckBox /></Row>
              </SecBody>
              <SecHeader>
                <SecLead><Tri $open $c="#777" /><FrameIcon /><CheckBox><Check /></CheckBox></SecLead>
                <SecTitle>Image</SecTitle>
                <ComponentActions />
              </SecHeader>
              <SecBody>
                <Row>
                  <Label>Source Image</Label>
                  <ObjField><ObjName><Sprite />UISprite</ObjName><Target /></ObjField>
                </Row>
                <ColorRow name="Color" c="#ffffff" indent={0} />
                <Row>
                  <Label>Material</Label>
                  <ObjField>None (Material)<Target /></ObjField>
                </Row>
                <Row><Label>Raycast Target</Label><CheckBox><Check /></CheckBox></Row>
                <Row><Label><LabelArrow><Tri $c="#666" /></LabelArrow>Raycast Padding</Label></Row>
                <Row><Label>Maskable</Label><CheckBox><Check /></CheckBox></Row>
                <Row><Label $indent={2}>Image Type</Label><DropDown text="Sliced" /></Row>
                <Row><Label $indent={11}>Fill Center</Label><CheckBox><Check /></CheckBox></Row>
                <Row><Label $indent={11}>Pixels Per Unit Multiplier</Label><NumField>1</NumField></Row>
              </SecBody>
              <SecHeader>
                <SecLead><Tri $open $c="#777" /><ButtonIcon /><CheckBox><Check /></CheckBox></SecLead>
                <SecTitle>Button</SecTitle>
                <ComponentActions />
              </SecHeader>
              <SecBody $pb={0}>
                <Row><Label>Interactable</Label><CheckBox><Check /></CheckBox></Row>
                <Row><Label>Transition</Label><DropDown text="Color Tint" /></Row>
                <Row>
                  <Label $indent={9}>Target Graphic</Label>
                  <ObjField><ObjName><Sprite $c="#bbb" />ButtonAnim (Image)</ObjName><Target /></ObjField>
                </Row>
                <ColorRow name="Normal Color" c="#ffffff" />
                <ColorRow name="Highlighted Color" c="#f5f5f5" under="#ffffff" />
                <ColorRow name="Pressed Color" c="#c8c8c8" under="#ffffff" />
                <ColorRow name="Selected Color" c="#f5f5f5" under="#ffffff" />
                <ColorRow name="Disabled Color" c="#c8c8c8" bar />
                <Row>
                  <Label $indent={9}>Color Multiplier</Label>
                  <SliderTrack><SliderThumb /></SliderTrack>
                  <NumField $w={30}>1</NumField>
                </Row>
                <Row><Label $indent={9}>Fade Duration</Label><NumField>0.1</NumField></Row>
                <Row $mt={5.5}><Label>Navigation</Label><DropDown text="Automatic" /></Row>
                <Row $mt={1}><RightValue><Visualize>Visualize</Visualize></RightValue></Row>
              </SecBody>
              <OnClick>
                <OnClickHead>On Click ()</OnClickHead>
                <OnClickRow>
                  <DropDown text="Runtime Only" w={82} />
                  <DropDown text="GetriebeAnim.PlayAnimation" />
                </OnClickRow>
                <OnClickRow2>
                  <TargetObj><ScriptIcon s={7} />_etriebeAR (Get<Target /></TargetObj>
                </OnClickRow2>
              </OnClick>
              <PlusMinus><span>+</span><span>−</span></PlusMinus>
            </Content>
            <Scrollbar>
              <UpArrow $open $c="#aaa" $s={2} />
              <Thumb />
            </Scrollbar>
          </InspectorBody>
        </InspectorPanel>
      </Editor>
    </RightArea>
  </Page>
);

export default App;
